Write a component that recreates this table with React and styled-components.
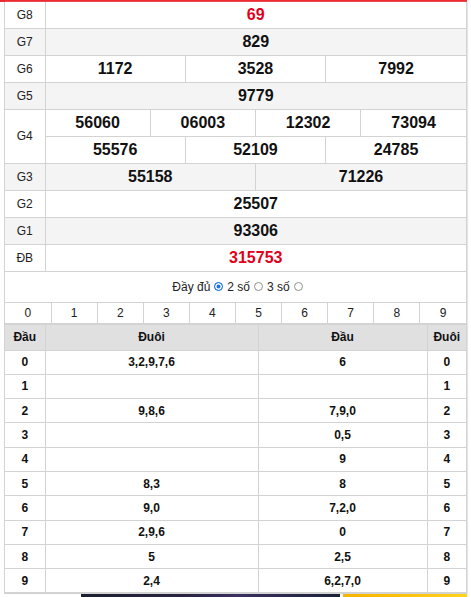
import React from "react";
import styled, { createGlobalStyle } from "styled-components";

const Global = createGlobalStyle`
  html, body { margin: 0; padding: 0; background: #fff; }
  body { font-family: "Liberation Sans", Arial, sans-serif; color: #000; }
`;

const Page = styled.div`
  border-top: 2px solid #ec2a2f;
  padding-left: 4px;
  width: 467px;
  box-sizing: border-box;
`;

const Panel = styled.div`
  width: 463px;
  box-sizing: border-box;
  border-left: 1px solid #d3d3d3;
  border-right: 1px solid #d3d3d3;
  border-bottom: 1px solid #d3d3d3;
  box-shadow: 1px 0 1px #e6e6e6;
  background: #fff;
`;

const Table = styled.table`
  width: 100%;
  border-collapse: collapse;
  table-layout: fixed;
`;

const Row = styled.tr`
  background: ${(p) => (p.$alt ? "#f4f4f4" : "#fff")};
  height: ${(p) => p.$h}px;
`;

const Label = styled.td`
  border: 1px solid #d3d3d3;
  border-left: none;
  border-top: none;
  text-align: center;
  font-size: 12px;
  color: #222;
  padding: 0;
`;

const Num = styled.td`
  border: 1px solid #d3d3d3;
  border-top: none;
  border-right: ${(p) => (p.$last ? "none" : "1px solid #d3d3d3")};
  text-align: center;
  font-size: 16px;
  font-weight: bold;
  color: ${(p) => (p.$red ? "#e1001b" : "#111")};
  padding: 0;
`;

const Options = styled.div`
  height: 30px;
  display: flex;
  align-items: center;
  justify-content: center;
  gap: 2px;
  font-size: 12px;
  color: #222;
  padding-left: 6px;
  box-sizing: border-box;
`;

const Radio = styled.span`
  display: inline-block;
  width: 9px;
  height: 9px;
  border-radius: 50%;
  box-sizing: border-box;
  border: 1px solid ${(p) => (p.$on ? "#1a73e8" : "#8f8f8f")};
  background: ${(p) => (p.$on ? "#1a73e8" : "#fff")};
  box-shadow: ${(p) => (p.$on ? "inset 0 0 0 1.5px #fff" : "none")};
  margin: 0 2px 0 2px;
`;

const DigitCell = styled.td`
  border: 1px solid #d3d3d3;
  border-bottom: 2px solid #d3d3d3;
  height: 20px;
  text-align: center;
  font-size: 12px;
  color: #222;
  padding: 0;
  &:first-child { border-left: none; }
  &:last-child { border-right: none; }
`;

const HeadCell = styled.th`
  background: #e0e0e0;
  border: 1px solid #d3d3d3;
  border-top: none;
  height: 25px;
  font-size: 12px;
  font-weight: bold;
  color: #111;
  padding: 0;
  &:first-child { border-left: none; }
  &:last-child { border-right: none; }
`;

const LotoCell = styled.td`
  border: 1px solid #d3d3d3;
  border-top: none;
  height: 23.3px;
  text-align: center;
  font-size: 12px;
  font-weight: bold;
  color: #111;
  padding: 0;
  &:first-child { border-left: none; }
  &:last-child { border-right: none; }
`;

const Banner = styled.div`
  display: flex;
  height: 6px;
  padding-left: 77px;
  gap: 3px;
`;

const BannerPart = styled.div`
  width: ${(p) => p.$w}px;
  background: ${(p) => p.$bg};
`;

const prizes = [
  { label: "G8", rows: [["69"]], red: true },
  { label: "G7", rows: [["829"]] },
  { label: "G6", rows: [["1172", "3528", "7992"]] },
  { label: "G5", rows: [["9779"]] },
  { label: "G4", rows: [["56060", "06003", "12302", "73094"], ["55576", "52109", "24785"]] },
  { label: "G3", rows: [["55158", "71226"]] },
  { label: "G2", rows: [["25507"]] },
  { label: "G1", rows: [["93306"]] },
  { label: "ĐB", rows: [["315753"]], red: true },
];

const loto = [
  ["0", "3,2,9,7,6", "6", "0"],
  ["1", "", "", "1"],
  ["2", "9,8,6", "7,9,0", "2"],
  ["3", "", "0,5", "3"],
  ["4", "", "9", "4"],
  ["5", "8,3", "8", "5"],
  ["6", "9,0", "7,2,0", "6"],
  ["7", "2,9,6", "0", "7"],
  ["8", "5", "2,5", "8"],
  ["9", "2,4", "6,2,7,0", "9"],
];

export default function App() {
  return (
    <Page>
      <Global />
      <Panel>
        <Table>
          <colgroup>
            <col style={{ width: 40 }} />
            {Array.from({ length: 12 }).map((_, i) => (
              <col key={i} />
            ))}
          </colgroup>
          <tbody>
            {prizes.map((p, idx) =>
              p.rows.map((r, ri) => (
                <Row key={p.label + ri} $alt={idx % 2 === 1} $h={idx === 0 ? 26 : 27}>
                  {ri === 0 && <Label rowSpan={p.rows.length}>{p.label}</Label>}
                  {r.map((n, ni) => (
                    <Num key={ni} colSpan={12 / r.length} $red={p.red} $last={ni === r.length - 1}>
                      {n}
                    </Num>
                  ))}
                </Row>
              ))
            )}
          </tbody>
        </Table>
        <Options>
          Đầy đủ <Radio $on /> 2 số <Radio /> 3 số <Radio />
        </Options>
        <Table>
          <tbody>
            <tr>
              {Array.from({ length: 10 }).map((_, i) => (
                <DigitCell key={i}>{i}</DigitCell>
              ))}
            </tr>
          </tbody>
        </Table>
        <Table>
          <colgroup>
            <col style={{ width: 40 }} />
            <col style={{ width: 213 }} />
            <col style={{ width: 169 }} />
            <col style={{ width: 39 }} />
          </colgroup>
          <thead>
            <tr>
              <HeadCell>Đầu</HeadCell>
              <HeadCell>Đuôi</HeadCell>
              <HeadCell>Đầu</HeadCell>
              <HeadCell>Đuôi</HeadCell>
            </tr>
          </thead>
          <tbody>
            {loto.map((r) => (
              <tr key={r[0]}>
                {r.map((c, i) => (
                  <LotoCell key={i}>{c}</LotoCell>
                ))}
              </tr>
            ))}
          </tbody>
        </Table>
      </Panel>
      <Banner>
        <BannerPart $w={259} $bg="linear-gradient(90deg,#1b1f2e,#2a2440 40%,#3b2f63 60%,#1a2236)" />
        <BannerPart $w={124} $bg="linear-gradient(90deg,#f6b400,#ffd21a)" />
      </Banner>
    </Page>
  );
}
